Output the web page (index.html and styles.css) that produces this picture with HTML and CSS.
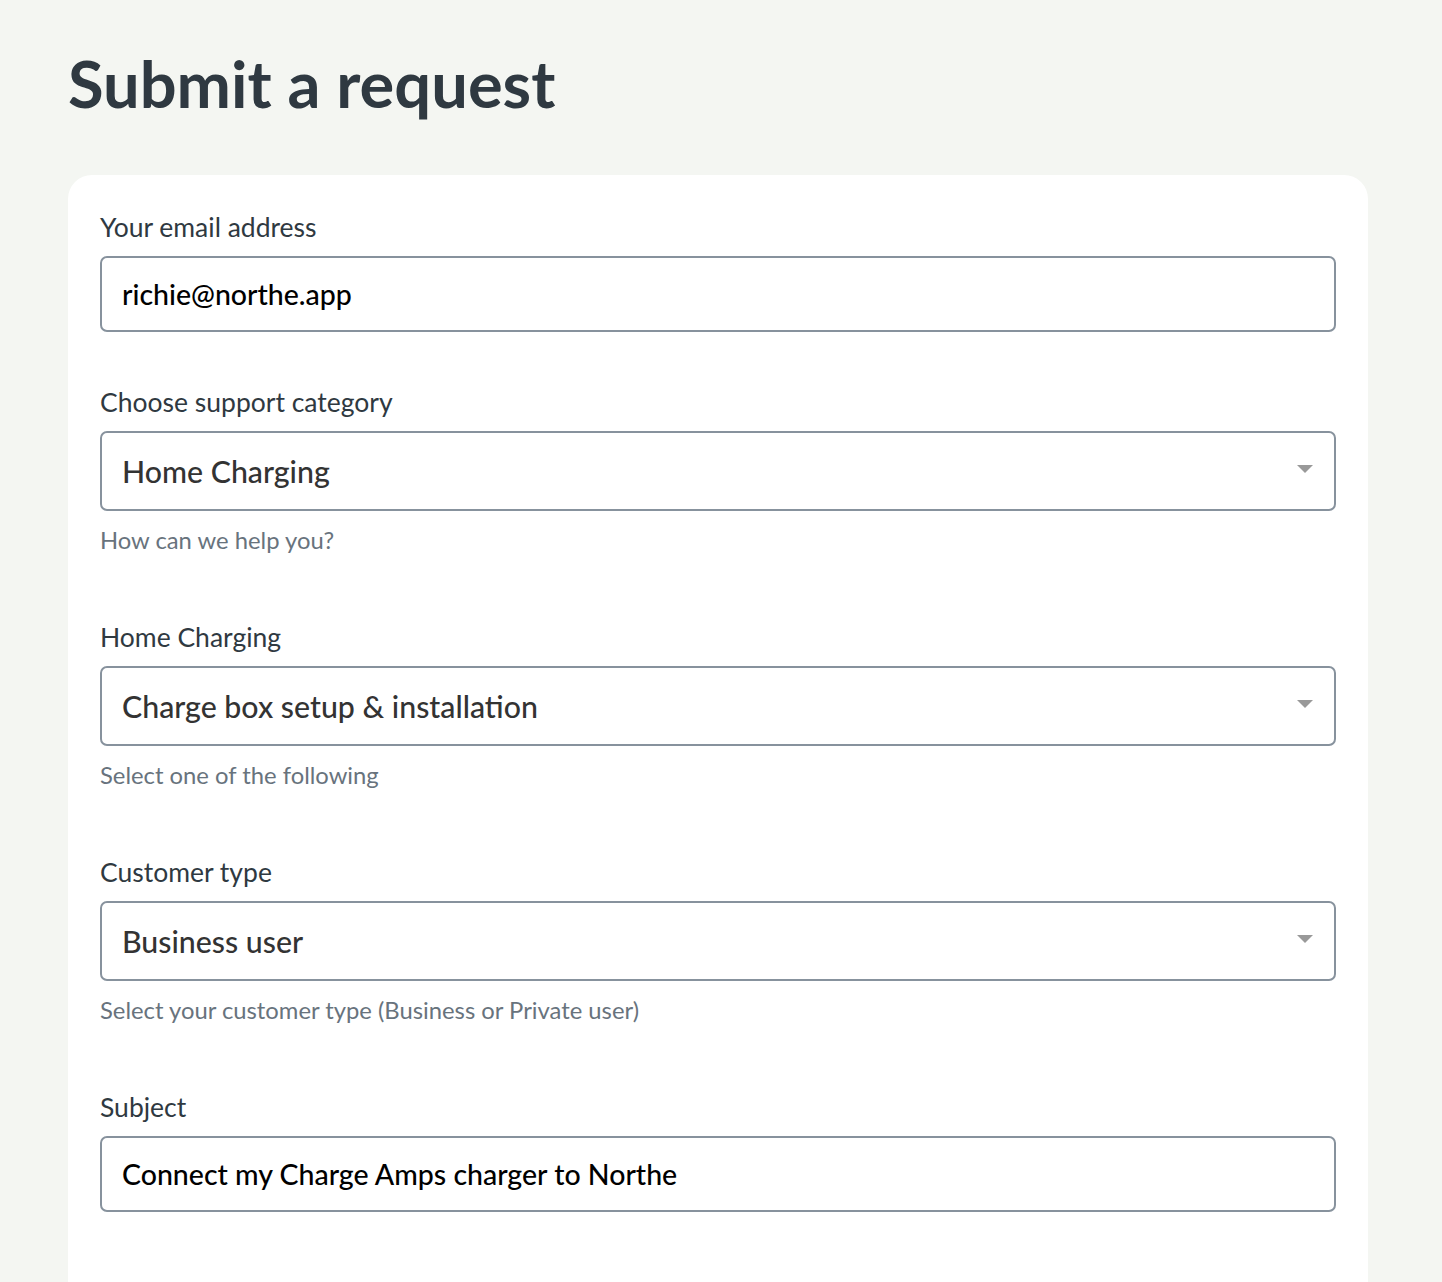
FILE: index.html
```html
<!DOCTYPE html>
<html lang="en">
<head>
    <meta charset="UTF-8">
    <meta name="viewport" content="width=device-width, initial-scale=1.0">
    <title>Submit a request</title>
    <link rel="stylesheet" href="styles.css">
</head>
<body>
    <div class="page">
        <h1>Submit a request</h1>

        <form class="request-form">
            <div class="field">
                <label for="email">Your email address</label>
                <input type="email" id="email" class="text-input" value="richie@northe.app">
            </div>

            <div class="field">
                <label for="category">Choose support category</label>
                <div class="select-wrap">
                    <select id="category">
                        <option>Home Charging</option>
                    </select>
                    <svg class="caret" width="16" height="8" viewBox="0 0 16 8"><path d="M0 0h16L8 8z" fill="#999"/></svg>
                </div>
                <p class="hint">How can we help you?</p>
            </div>

            <div class="field">
                <label for="topic">Home Charging</label>
                <div class="select-wrap">
                    <select id="topic">
                        <option>Charge box setup &amp; installation</option>
                    </select>
                    <svg class="caret" width="16" height="8" viewBox="0 0 16 8"><path d="M0 0h16L8 8z" fill="#999"/></svg>
                </div>
                <p class="hint">Select one of the following</p>
            </div>

            <div class="field">
                <label for="customer">Customer type</label>
                <div class="select-wrap">
                    <select id="customer">
                        <option>Business user</option>
                    </select>
                    <svg class="caret" width="16" height="8" viewBox="0 0 16 8"><path d="M0 0h16L8 8z" fill="#999"/></svg>
                </div>
                <p class="hint">Select your customer type (Business or Private user)</p>
            </div>

            <div class="field">
                <label for="subject">Subject</label>
                <input type="text" id="subject" class="text-input" value="Connect my Charge Amps charger to Northe">
            </div>
        </form>
    </div>
</body>
</html>
```

FILE: styles.css
```css
body {
    font-family: 'Lato', 'Liberation Sans', sans-serif;
    margin: 0;
    padding: 0;
    background-color: #f4f6f2;
    color: #2f3941;
}
.page {
    width: 1300px;
    padding: 46px 0 0 68px;
}
h1 {
    font-size: 65px;
    line-height: 74px;
    font-weight: 700;
    margin: 0 0 55px;
    color: #2f3941;
}
.request-form {
    background: #ffffff;
    border-radius: 24px;
    padding: 37px 32px 120px;
}
.field {
    margin-bottom: 55px;
}
.field label {
    display: block;
    font-size: 26.5px;
    line-height: 30px;
    font-weight: 400;
    margin-bottom: 14px;
    color: #2f3941;
}
.text-input, .select-wrap select {
    display: block;
    width: 100%;
    box-sizing: border-box;
    border: 2px solid #87929d;
    border-radius: 7px;
    background: #fff;
    font-family: 'Lato', 'Liberation Sans', sans-serif;
    padding: 0 20px;
    margin: 0;
    outline: none;
}
.text-input {
    height: 76px;
    font-size: 28.5px;
    font-weight: 500;
    color: #000;
}
.select-wrap {
    position: relative;
}
.select-wrap select {
    height: 80px;
    font-size: 30.3px;
    font-weight: 500;
    color: #333;
    appearance: none;
    -webkit-appearance: none;
}
.caret {
    position: absolute;
    right: 23px;
    top: 34px;
    pointer-events: none;
}
.hint {
    font-size: 23.8px;
    line-height: 30px;
    margin: 14px 0 0;
    padding-bottom: 12px;
    color: #68737d;
}
```
